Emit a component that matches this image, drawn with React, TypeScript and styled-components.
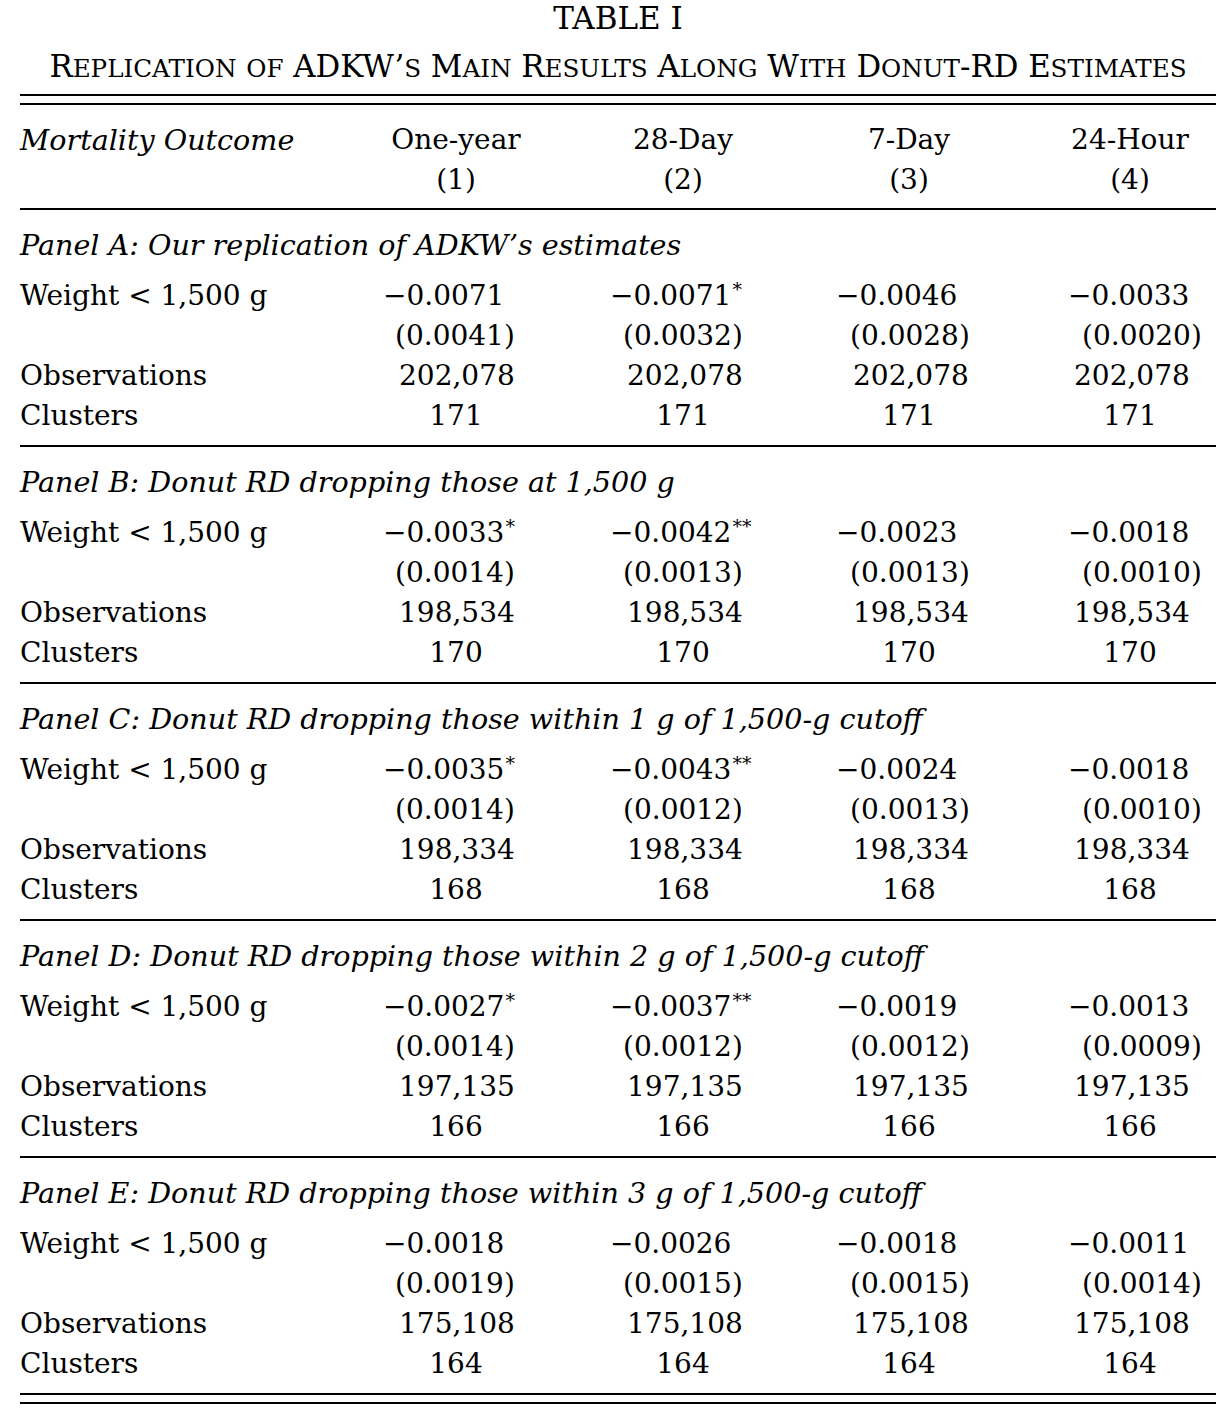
import React from "react";
import styled, { createGlobalStyle } from "styled-components";

const GlobalStyle = createGlobalStyle`
  body {
    margin: 0;
    background: #ffffff;
    color: #000000;
    font-family: "DejaVu Serif", "Liberation Serif", serif;
  }
`;

const Page = styled.div`
  width: 1196px;
  padding: 0 0 16px 20px;
  font-size: 28px;
`;

const Title = styled.div`
  text-align: center;
  font-size: 31px;
  line-height: 36px;
  height: 36px;
`;

const Subtitle = styled.div`
  margin-top: 10px;
  text-align: center;
  font-size: 30.8px;
  line-height: 40px;
  height: 40px;
  white-space: nowrap;
`;

// small caps drawn from real letters: first letter full size, rest smaller capitals
const Sc = styled.span`
  font-size: 0.8em;
  line-height: 0;
  text-transform: uppercase;
`;

const DoubleRule = styled.div<{ $mt: number }>`
  margin-top: ${(p) => p.$mt}px;
  height: 7px;
  border-top: 2px solid #000;
  border-bottom: 2px solid #000;
`;

const Header = styled.div`
  padding: 15px 0 8px;
  border-bottom: 2px solid #000;
`;

const Panel = styled.div<{ $last?: boolean }>`
  padding: 15px 0 9px;
  border-bottom: ${(p) => (p.$last ? "none" : "2px solid #000")};
`;

const PanelTitle = styled.div`
  font-style: italic;
  font-size: 28.6px;
  line-height: 40px;
  height: 40px;
  margin-bottom: 11px;
  white-space: nowrap;
`;

const Row = styled.div`
  display: grid;
  grid-template-columns: 323px 226px 228px 224px 195px;
  line-height: 40px;
  height: 40px;
  white-space: nowrap;
`;

const Label = styled.div<{ $italic?: boolean }>`
  font-style: ${(p) => (p.$italic ? "italic" : "normal")};
  font-size: ${(p) => (p.$italic ? "28.6px" : "28px")};
`;

const Cell = styled.div<{ $center?: boolean; $offset: number }>`
  text-align: ${(p) => (p.$center ? "center" : "left")};
  padding-left: ${(p) =>
    p.$center ? Math.max(0, p.$offset * 2) : p.$offset}px;
  padding-right: ${(p) => (p.$center ? Math.max(0, -p.$offset * 2) : 0)}px;
`;

const Star = styled.span`
  font-size: 19px;
  position: relative;
  top: -9px;
  line-height: 0;
  margin-left: 1px;
`;

type Col = { coef: number; se: number; obs: number; shift: number };

const cols: Col[] = [
  { coef: 40, se: 52, obs: 56, shift: 0 },
  { coef: 41, se: 54, obs: 58, shift: 0 },
  { coef: 39, se: 53, obs: 56, shift: 0 },
  { coef: 47, se: 61, obs: 53, shift: 11.5 },
];

type PanelData = {
  title: string;
  coef: [string, string][];
  se: string[];
  obs: string;
  clusters: string;
};

const panels: PanelData[] = [
  {
    title: "Panel A: Our replication of ADKW\u2019s estimates",
    coef: [["\u22120.0071", ""], ["\u22120.0071", "*"], ["\u22120.0046", ""], ["\u22120.0033", ""]],
    se: ["(0.0041)", "(0.0032)", "(0.0028)", "(0.0020)"],
    obs: "202,078",
    clusters: "171",
  },
  {
    title: "Panel B: Donut RD dropping those at 1,500 g",
    coef: [["\u22120.0033", "*"], ["\u22120.0042", "**"], ["\u22120.0023", ""], ["\u22120.0018", ""]],
    se: ["(0.0014)", "(0.0013)", "(0.0013)", "(0.0010)"],
    obs: "198,534",
    clusters: "170",
  },
  {
    title: "Panel C: Donut RD dropping those within 1 g of 1,500-g cutoff",
    coef: [["\u22120.0035", "*"], ["\u22120.0043", "**"], ["\u22120.0024", ""], ["\u22120.0018", ""]],
    se: ["(0.0014)", "(0.0012)", "(0.0013)", "(0.0010)"],
    obs: "198,334",
    clusters: "168",
  },
  {
    title: "Panel D: Donut RD dropping those within 2 g of 1,500-g cutoff",
    coef: [["\u22120.0027", "*"], ["\u22120.0037", "**"], ["\u22120.0019", ""], ["\u22120.0013", ""]],
    se: ["(0.0014)", "(0.0012)", "(0.0012)", "(0.0009)"],
    obs: "197,135",
    clusters: "166",
  },
  {
    title: "Panel E: Donut RD dropping those within 3 g of 1,500-g cutoff",
    coef: [["\u22120.0018", ""], ["\u22120.0026", ""], ["\u22120.0018", ""], ["\u22120.0011", ""]],
    se: ["(0.0019)", "(0.0015)", "(0.0015)", "(0.0014)"],
    obs: "175,108",
    clusters: "164",
  },
];

const heads = [
  ["One-year", "(1)"],
  ["28-Day", "(2)"],
  ["7-Day", "(3)"],
  ["24-Hour", "(4)"],
];

const subtitle = "Replication of ADKW\u2019s Main Results Along With Donut-RD Estimates";

const SmallCaps = ({ text }: { text: string }) => (
  <>
    {text.split(" ").map((w, i) => {
      // words are split into runs of capitals (full size) and lower case (small caps)
      const parts = w.match(/[A-Z\-\u2019]+|[^A-Z\-\u2019]+/g) || [];
      return (
        <React.Fragment key={i}>
          {i > 0 && " "}
          {parts.map((p, j) =>
            /[a-z]/.test(p) ? <Sc key={j}>{p}</Sc> : <React.Fragment key={j}>{p}</React.Fragment>
          )}
        </React.Fragment>
      );
    })}
  </>
);

const App = () => {
  return (
    <Page>
      <GlobalStyle />
      <Title>TABLE I</Title>
      <Subtitle>
        <SmallCaps text={subtitle} />
      </Subtitle>
      <DoubleRule $mt={8} />

      <Header>
        <Row>
          <Label $italic>Mortality Outcome</Label>
          {heads.map((h, i) => (
            <Cell key={i} $center $offset={cols[i].shift}>
              {h[0]}
            </Cell>
          ))}
        </Row>
        <Row>
          <Label />
          {heads.map((h, i) => (
            <Cell key={i} $center $offset={cols[i].shift}>
              {h[1]}
            </Cell>
          ))}
        </Row>
      </Header>

      {panels.map((p, pi) => (
        <Panel key={pi} $last={pi === panels.length - 1}>
          <PanelTitle>{p.title}</PanelTitle>
          <Row>
            <Label>Weight &lt; 1,500 g</Label>
            {p.coef.map((c, i) => (
              <Cell key={i} $offset={cols[i].coef}>
                {c[0]}
                {c[1] && <Star>{c[1]}</Star>}
              </Cell>
            ))}
          </Row>
          <Row>
            <Label />
            {p.se.map((s, i) => (
              <Cell key={i} $offset={cols[i].se}>
                {s}
              </Cell>
            ))}
          </Row>
          <Row>
            <Label>Observations</Label>
            {cols.map((c, i) => (
              <Cell key={i} $offset={c.obs}>
                {p.obs}
              </Cell>
            ))}
          </Row>
          <Row>
            <Label>Clusters</Label>
            {cols.map((c, i) => (
              <Cell key={i} $center $offset={c.shift}>
                {p.clusters}
              </Cell>
            ))}
          </Row>
        </Panel>
      ))}

      <DoubleRule $mt={0} />
    </Page>
  );
};

export default App;
